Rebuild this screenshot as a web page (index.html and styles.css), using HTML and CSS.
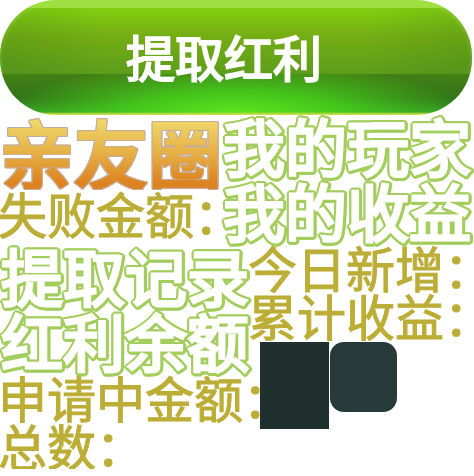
FILE: index.html
```html
<!DOCTYPE html>
<html lang="zh-CN">
<head>
<meta charset="utf-8">
<title>提取红利</title>
<link rel="stylesheet" href="styles.css">
</head>
<body>
<main class="sheet">
  <button class="withdraw" type="button"><span class="withdraw-text">提取红利</span></button>
  <section class="row row-top">
    <div>
      <h1 class="title">亲友圈</h1>
      <p class="label">失败金额：</p>
    </div>
    <div>
      <h2 class="outlined">我的玩家</h2>
      <h2 class="outlined">我的收益</h2>
    </div>
  </section>
  <section class="row row-bottom">
    <div>
      <h2 class="outlined">提取记录</h2>
      <h2 class="outlined">红利余额</h2>
      <p class="label">申请中金额：</p>
      <p class="label">总数：</p>
    </div>
    <div>
      <p class="label">今日新增：</p>
      <p class="label">累计收益：</p>
      <div class="panels">
        <div class="panel"></div>
        <div class="panel panel-round"></div>
      </div>
    </div>
  </section>
</main>
</body>
</html>
```
FILE: styles.css
```css
* { box-sizing: border-box; }

body {
  margin: 0;
  background: #fff;
  font-family: "Noto Sans CJK SC", sans-serif;
  overflow: hidden;
}

h1, h2, p { margin: 0; white-space: nowrap; }

.sheet { padding-right: 2px; }

.withdraw {
  position: relative;
  display: block;
  width: 100%;
  height: 115px;
  padding: 0 24px 4px 0;
  border: 0;
  border-radius: 56px;
  overflow: hidden;
  background:
    linear-gradient(#a0df42 0 8px, transparent 8px),
    linear-gradient(#84d010 8px, #74ad14 36px, #5d9d1b 74px, transparent 74px),
    linear-gradient(transparent 112px, #c8dc48 114px),
    radial-gradient(ellipse 240px 50px at 50% 114px, #5fe41d, #48cf1bdd 45%, #48cf1b00),
    linear-gradient(#448014 74px, #30721a 100px, #329c28 114px);
  color: #fff;
  font: 400 49px/48px "Noto Sans CJK SC", sans-serif;
}

.withdraw::before {
  content: "";
  position: absolute;
  inset: 0;
  border-radius: 56px;
  background: linear-gradient(90deg, #0b4a1220, transparent 22% 78%, #0b4a1220);
  box-shadow: inset 0 2px 5px #b4ec6c60;
  clip-path: inset(8px 0 41px);
}

.withdraw-text {
  position: relative;
  -webkit-text-stroke: 2px #fff;
  stroke-linejoin: round;
}

.row { display: grid; }
.row-top {
  grid-template-columns: 222px minmax(0, 1fr);
  margin-top: -2px;
}
.row-bottom { grid-template-columns: 250px minmax(0, 1fr); }

.title {
  font-size: 74px;
  line-height: 76px;
  font-weight: 500;
  color: transparent;
  -webkit-text-stroke: 2px transparent;
  stroke-linejoin: round;
  background: linear-gradient(#efd76a 8px, #e6b044 40px, #dd8220 70px);
  -webkit-background-clip: text;
  background-clip: text;
  filter:
    drop-shadow(1px 0 #c8ad98) drop-shadow(-1px 0 #c8ad98)
    drop-shadow(0 1px #c8ad98) drop-shadow(0 -1px #c8ad98);
}

.label {
  margin-left: -2px;
  font-size: 49px;
  line-height: 48px;
  font-weight: 400;
  color: #bbad35;
  -webkit-text-stroke: 1px #bbad35;
  stroke-linejoin: round;
}

.outlined {
  padding-left: 1px;
  font-size: 62px;
  line-height: 65px;
  font-weight: 400;
  color: #fff;
  -webkit-text-stroke: 3px #fff;
  stroke-linejoin: round;
  filter:
    drop-shadow(1px 1px #a3cd5c) drop-shadow(-1px -1px #a3cd5c)
    drop-shadow(1px -1px #a3cd5c) drop-shadow(-1px 1px #a3cd5c)
    drop-shadow(1px 0 #a3cd5c) drop-shadow(0 1px #a3cd5c);
}

.panels {
  display: flex;
  align-items: flex-start;
  gap: 1px;
  padding: 3px 0 0 10px;
}

.panel {
  width: 69px;
  height: 87px;
  background: #20302f;
}

.panel-round {
  width: 67px;
  height: 70px;
  border-radius: 14px;
  background: #263a39;
}
```
